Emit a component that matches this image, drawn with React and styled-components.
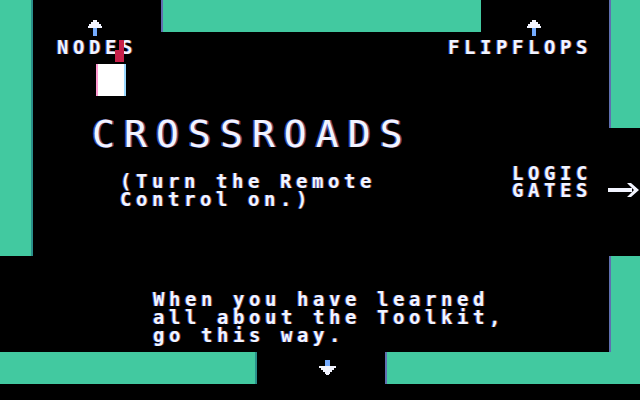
import React from 'react';
import styled, { createGlobalStyle } from 'styled-components';

const GlobalStyle = createGlobalStyle`
  html, body {
    margin: 0;
    padding: 0;
    background: #000;
  }
`;

const TEAL = '#42c9a0';
const INK = '#f2f4ff';

// Column lines: 0, 33, 161, 257, 385, 481, 609, 640
// Row lines:    0, 32, 128, 256, 352, 384, 400
const Screen = styled.div`
  width: 640px;
  height: 400px;
  background: #000;
  display: grid;
  grid-template-columns: 33px 128px 96px 128px 96px 128px 31px;
  grid-template-rows: 32px 96px 128px 96px 32px 16px;
  overflow: hidden;
  font-family: "DejaVu Sans Mono", "Liberation Mono", monospace;
  color: ${INK};
`;

const Wall = styled.div`
  grid-column: ${p => p.$col};
  grid-row: ${p => p.$row};
  background: ${TEAL};
  box-shadow: ${p =>
    p.$edge === 'left'
      ? 'inset 2px 0 0 #5f6fb0'
      : p.$edge === 'right'
      ? 'inset -2px 0 0 #2a8f8a'
      : 'none'};
`;

const Text = styled.div`
  font-size: 19px;
  font-weight: bold;
  letter-spacing: 4.56px;
  line-height: ${p => p.$lh || 18}px;
  white-space: pre;
  text-shadow: -1px 0 rgba(60, 110, 255, 0.7), 1px 0 rgba(255, 120, 80, 0.45);
`;

const Exit = styled.div`
  grid-column: ${p => p.$col};
  grid-row: ${p => p.$row};
  padding: ${p => p.$pad};
  display: flex;
  flex-direction: column;
  align-items: flex-start;
  z-index: 1;
`;

const ArrowUp = styled.svg`
  width: 14px;
  height: 16px;
  margin-left: ${p => p.$shift}px;
  margin-bottom: 2px;
  display: block;
`;

const TitleBlock = styled.div`
  grid-column: 2 / 7;
  grid-row: 2 / 4;
  padding: 83px 0 0 59px;
  display: flex;
  flex-direction: column;
  align-items: flex-start;
`;

const Title = styled.h1`
  margin: 0;
  font-size: 38px;
  font-weight: normal;
  letter-spacing: 9.1px;
  line-height: 38px;
  text-shadow: -1.5px 0 rgba(80, 120, 255, 0.7), 1.5px 0 rgba(255, 140, 200, 0.5);
`;

const Subtitle = styled(Text)`
  margin: 19px 0 0 28px;
`;

const GatesLine = styled.div`
  display: flex;
  align-items: flex-end;
`;

const ArrowRight = styled.svg`
  width: 31px;
  height: 14px;
  margin: 0 0 2px 16px;
  display: block;
`;

const Message = styled.div`
  grid-column: 2 / -1;
  grid-row: 4 / 5;
  padding: 34px 0 0 120px;
`;

const DownExit = styled.div`
  grid-column: 4 / 5;
  grid-row: 5 / 6;
  padding: 8px 0 0 62px;
`;

const ArrowDown = styled.svg`
  width: 17px;
  height: 15px;
  display: block;
`;

const PlayerSlot = styled.div`
  grid-column: 2 / 3;
  grid-row: 1 / 3;
  padding: 40px 0 0 63px;
  z-index: 2;
`;

const Player = styled.svg`
  width: 30px;
  height: 56px;
  display: block;
`;

function UpArrow({ shift }) {
  return (
    <ArrowUp $shift={shift} viewBox="0 0 14 16">
      <path d="M5 0H9V2H11V4H13V6H14V8H9V16H5V8H0V6H1V4H3V2H5Z" fill={INK} />
      <path d="M5 8H9V16H5Z" fill="#3f8cff" opacity="0.7" />
    </ArrowUp>
  );
}

export default function App() {
  return (
    <>
      <GlobalStyle />
      <Screen>
        <Wall $col="1 / 2" $row="1 / 4" $edge="right" />
        <Wall $col="3 / 6" $row="1 / 2" $edge="left" />
        <Wall $col="7 / 8" $row="1 / 3" $edge="left" />
        <Wall $col="7 / 8" $row="4 / 6" $edge="left" />
        <Wall $col="1 / 4" $row="5 / 6" $edge="right" />
        <Wall $col="5 / 8" $row="5 / 6" $edge="left" />

        <Exit $col="2 / 4" $row="1 / 3" $pad="20px 0 0 24px">
          <UpArrow shift={31} />
          <Text>NODES</Text>
        </Exit>

        <Exit $col="5 / 8" $row="1 / 3" $pad="20px 0 0 63px">
          <UpArrow shift={79} />
          <Text>FLIPFLOPS</Text>
        </Exit>

        <PlayerSlot>
          <Player viewBox="0 0 30 56">
            <rect x="19" y="10" width="9" height="12" fill="#c8204a" />
            <rect x="23" y="0" width="5" height="10" fill="#c8204a" />
            <rect x="0" y="24" width="30" height="32" fill="#ffffff" />
            <rect x="0" y="24" width="2" height="32" fill="#ff9ad0" />
            <rect x="28" y="24" width="2" height="32" fill="#9ad8ff" />
          </Player>
        </PlayerSlot>

        <TitleBlock>
          <Title>CROSSROADS</Title>
          <Subtitle>{'(Turn the Remote\nControl on.)'}</Subtitle>
        </TitleBlock>

        <Exit $col="6 / 8" $row="3 / 4" $pad="37px 0 0 31px">
          <GatesLine>
            <Text $lh={17}>{'LOGIC\nGATES'}</Text>
            <ArrowRight viewBox="0 0 31 14">
              <path d="M0 5H24V9H0Z" fill={INK} />
              <path d="M19 0H23L31 7L23 14H19L26 7Z" fill={INK} />
            </ArrowRight>
          </GatesLine>
        </Exit>

        <Message>
          <Text>{'When you have learned\nall about the Toolkit,\ngo this way.'}</Text>
        </Message>

        <DownExit>
          <ArrowDown viewBox="0 0 17 15">
            <path d="M6 0H11V6H17V8H15V10H13V12H11V14H10V15H7V14H6V12H4V10H2V8H0V6H6Z" fill={INK} />
            <path d="M6 0H11V6H6Z" fill="#3f8cff" opacity="0.7" />
          </ArrowDown>
        </DownExit>
      </Screen>
    </>
  );
}
